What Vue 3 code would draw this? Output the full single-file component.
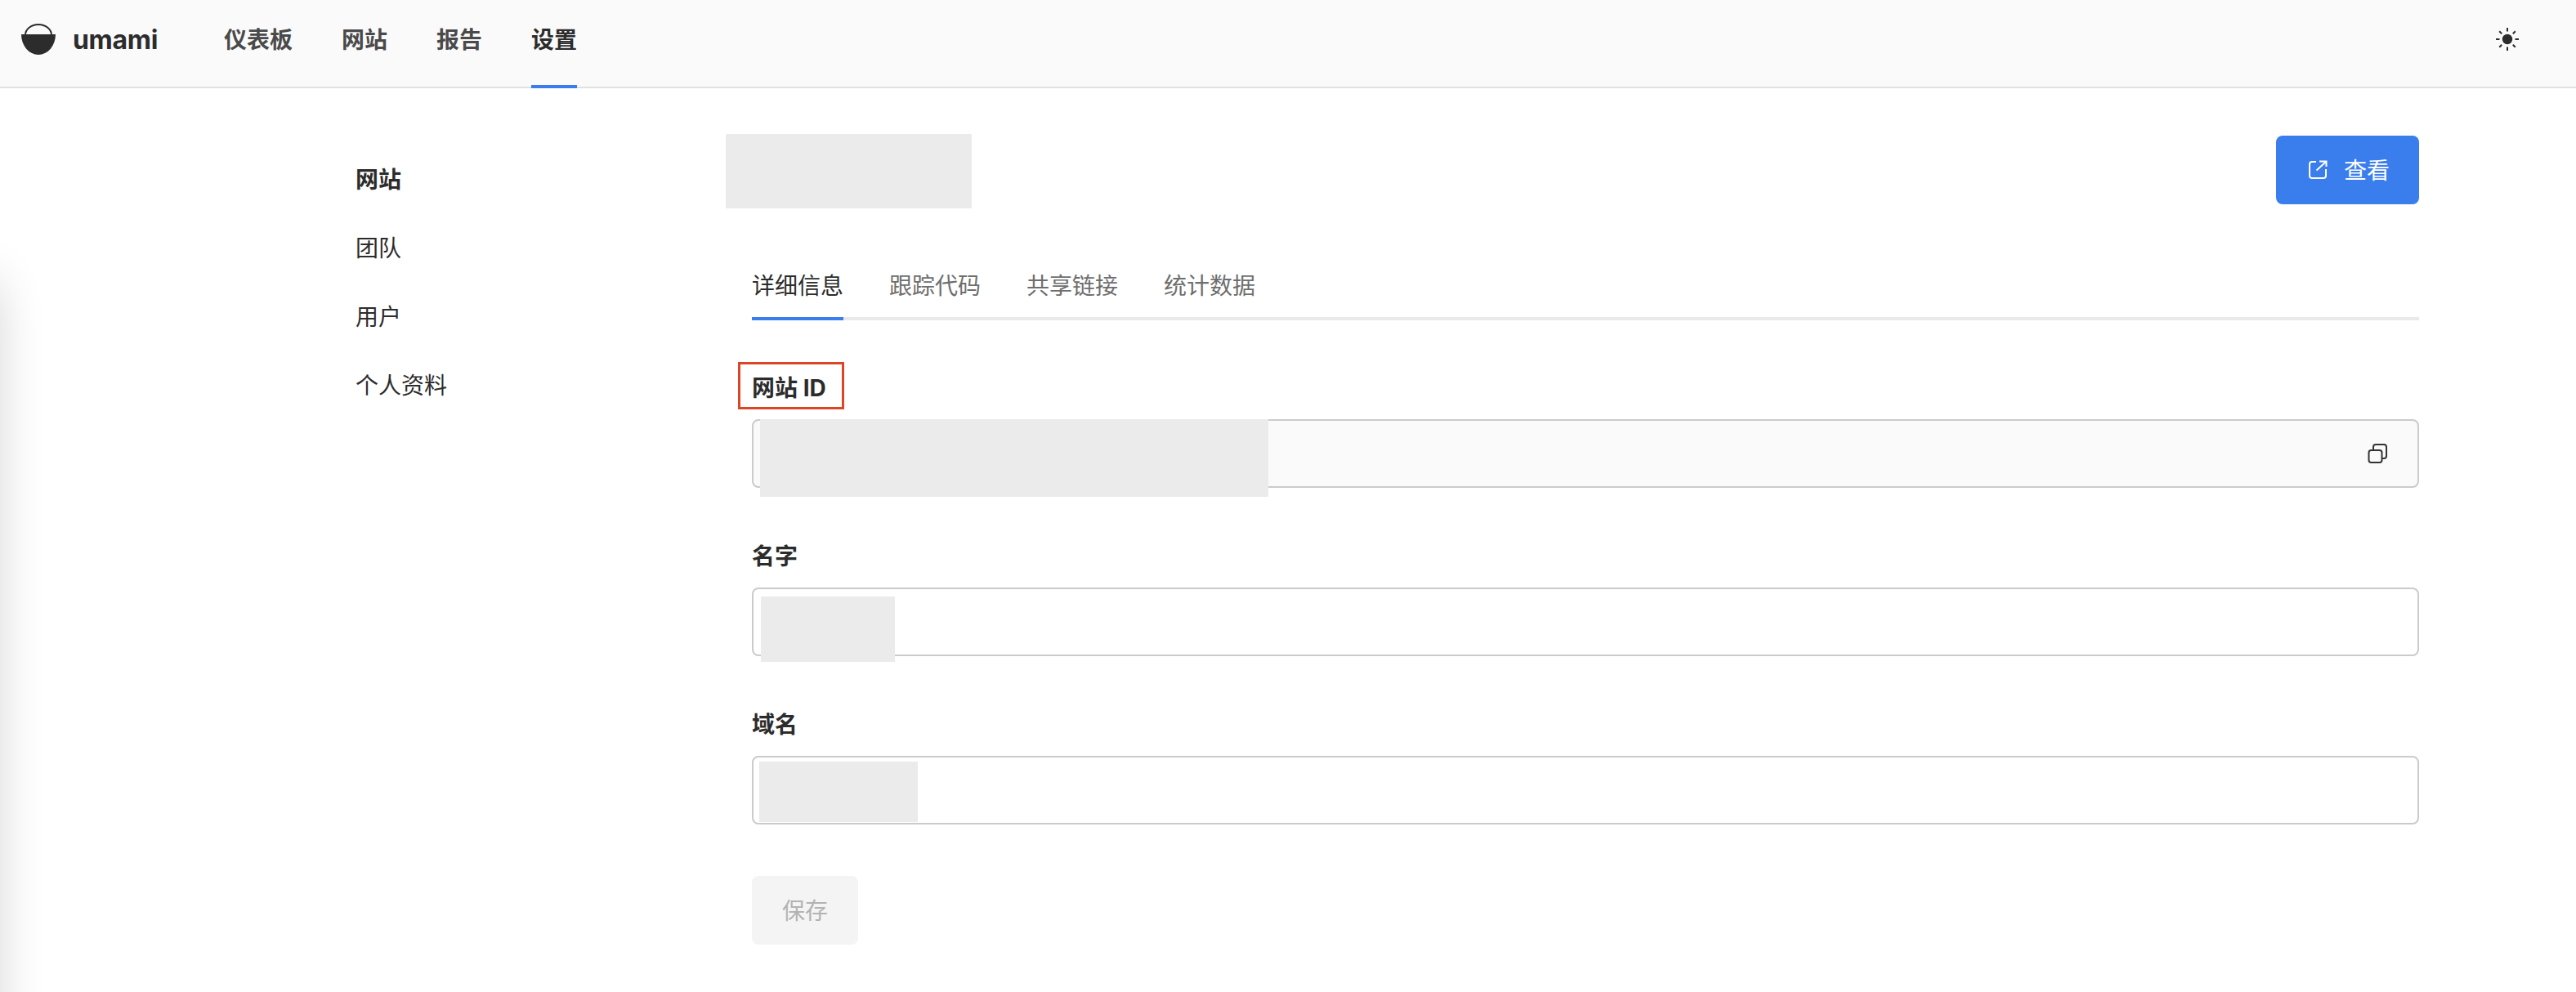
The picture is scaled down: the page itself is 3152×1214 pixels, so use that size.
<script setup>
const navItems = [
  { label: '仪表板' },
  { label: '网站' },
  { label: '报告' },
  { label: '设置', active: true },
]
const sideItems = [
  { label: '网站', active: true },
  { label: '团队' },
  { label: '用户' },
  { label: '个人资料' },
]
const tabs = [
  { label: '详细信息', active: true },
  { label: '跟踪代码' },
  { label: '共享链接' },
  { label: '统计数据' },
]
</script>

<template>
  <div class="app">
    <div class="edge-shadow"></div>
    <header class="topbar">
      <div class="brand">
        <svg class="logo" width="42" height="40" viewBox="0 0 42 40">
          <path d="M5 14a16 13 0 0 1 32 0" fill="none" stroke="#2c2c2c" stroke-width="2" />
          <path d="M0 13h42a21 25 0 0 1-42 0z" fill="#2c2c2c" />
        </svg>
        <span class="brand-name">umami</span>
      </div>
      <nav class="nav">
        <a v-for="item in navItems" :key="item.label" class="nav-item" :class="{ active: item.active }">{{ item.label }}</a>
      </nav>
      <svg class="sun" width="30" height="30" viewBox="0 0 30 30">
        <circle cx="15" cy="15" r="6.2" fill="#2c2c2c" />
        <g stroke="#2c2c2c" stroke-width="2" fill="none">
          <path d="M15 1v4.5M15 24.5V29M1 15h4.5M24.5 15H29M5.2 5.2l3 3M21.8 21.8l3 3M5.2 24.8l3-3M21.8 8.2l3-3" />
        </g>
      </svg>
    </header>

    <div class="body">
      <aside class="side">
        <a v-for="item in sideItems" :key="item.label" class="side-item" :class="{ active: item.active }">{{ item.label }}</a>
      </aside>

      <main class="main">
        <div class="title-row">
          <div class="title-mask"></div>
          <button class="view-btn" type="button">
            <svg width="24" height="24" viewBox="0 0 24 24" fill="none" stroke="#fff" stroke-width="2">
              <path d="M10 2H5a3 3 0 0 0-3 3v14a3 3 0 0 0 3 3h14a3 3 0 0 0 3-3v-8" />
              <path d="M10.5 12.5L22.5 1.5M14 1.5h8.5V8" />
            </svg>
            <span class="view-text">查看</span>
          </button>
        </div>

        <div class="panel">
          <div class="tabs">
            <a v-for="tab in tabs" :key="tab.label" class="tab" :class="{ active: tab.active }">{{ tab.label }}</a>
          </div>

          <form class="form" @submit.prevent>
            <div class="field">
              <label class="label marked">网站 ID</label>
              <div class="input readonly">
                <div class="mask mask-id"></div>
                <svg class="copy" width="24" height="24" viewBox="0 0 24 24" fill="none" stroke="#333" stroke-width="2">
                  <rect x="1.5" y="8" width="16" height="15" rx="3" />
                  <path d="M7 7V4a3 3 0 0 1 3-3h10a3 3 0 0 1 3 3v11a3 3 0 0 1-3 3h-2" />
                </svg>
              </div>
            </div>
            <div class="field">
              <label class="label">名字</label>
              <div class="input"><div class="mask mask-name"></div></div>
            </div>
            <div class="field">
              <label class="label">域名</label>
              <div class="input"><div class="mask mask-domain"></div></div>
            </div>
            <button class="save" type="button" disabled>保存</button>
          </form>
        </div>
      </main>
    </div>
  </div>
</template>

<style>
html, body { margin: 0; background: #fff; }
</style>

<style scoped>
.app {
  position: relative;
  height: 100vh;
  overflow: hidden;
  background: #fff;
  color: #2c2c2c;
  font-family: Inter, "Noto Sans CJK SC", sans-serif;
  font-size: 28px;
}
.edge-shadow {
  position: absolute;
  left: -60px;
  top: 340px;
  width: 55px;
  height: 1400px;
  border-radius: 30px;
  box-shadow: 0 0 60px rgba(0, 0, 0, 0.19);
}
.topbar {
  position: relative;
  display: flex;
  align-items: flex-start;
  height: 108px;
  padding: 0 69px 0 26px;
  box-sizing: border-box;
  background: #fafafa;
  box-shadow: inset 0 -2px 0 #e1e1e1;
}
.brand {
  display: flex;
  align-items: center;
  gap: 21px;
  width: 248px;
  height: 98px;
}
.logo { flex: none; }
.brand-name {
  font-size: 32px;
  font-weight: 700;
  line-height: 40px;
  letter-spacing: -0.3px;
}
.nav {
  display: flex;
  gap: 60px;
  flex: 1;
}
.nav-item {
  display: block;
  height: 108px;
  box-sizing: border-box;
  line-height: 98px;
  font-weight: 700;
  color: #4a4a4a;
  border-bottom: 4px solid transparent;
}
.nav-item.active {
  color: #2c2c2c;
  border-bottom-color: #3a7dec;
}
.sun { flex: none; margin-top: 33px; }
.body { display: flex; }
.side {
  display: flex;
  flex-direction: column;
  flex: none;
  width: 453px;
  padding: 70px 0 0 435px;
}
.side-item {
  display: block;
  line-height: 84px;
}
.side-item.active { font-weight: 700; }
.main {
  flex: none;
  width: 2072px;
  padding-top: 56px;
}
.title-row {
  display: flex;
  justify-content: space-between;
  align-items: flex-start;
}
.title-mask {
  width: 301px;
  height: 91px;
  background: #ebebeb;
}
.view-btn {
  display: flex;
  align-items: center;
  gap: 20px;
  width: 175px;
  height: 84px;
  margin-top: 2px;
  padding: 0 0 0 39px;
  box-sizing: border-box;
  border: 0;
  border-radius: 8px;
  background: #3a7dec;
  color: #fff;
  font: inherit;
}
.view-text { margin-top: -2px; }
.panel {
  margin: 75px 0 0 32px;
}
.tabs {
  display: flex;
  gap: 56px;
  border-bottom: 4px solid #e9e9e9;
}
.tab {
  display: block;
  margin-bottom: -4px;
  padding-bottom: 18px;
  line-height: 40px;
  color: #6e6e6e;
  border-bottom: 4px solid transparent;
}
.tab.active {
  color: #2c2c2c;
  border-bottom-color: #3a7dec;
}
.form {
  display: flex;
  flex-direction: column;
  gap: 64px;
  margin-top: 63px;
}
.field {
  display: flex;
  flex-direction: column;
  gap: 18px;
}
.label {
  position: relative;
  align-self: flex-start;
  line-height: 40px;
  font-weight: 700;
}
.label.marked::after {
  content: "";
  position: absolute;
  left: -17px;
  top: -12px;
  width: 130px;
  height: 58px;
  box-sizing: border-box;
  border: 3px solid #dc4626;
}
.input {
  position: relative;
  display: flex;
  align-items: center;
  justify-content: flex-end;
  height: 84px;
  box-sizing: border-box;
  padding-right: 37px;
  border: 2px solid #cbcbcb;
  border-radius: 8px;
  background: #fff;
}
.input.readonly { background: #fafafa; }
.mask {
  position: absolute;
  background: #ebebeb;
}
.mask-id { left: 8px; top: -2px; width: 622px; height: 95px; }
.mask-name { left: 9px; top: 9px; width: 164px; height: 80px; }
.mask-domain { left: 7px; top: 5px; width: 194px; height: 74px; }
.copy { position: relative; }
.save {
  width: 130px;
  height: 84px;
  margin-top: -1px;
  padding: 0 0 2px;
  border: 0;
  border-radius: 8px;
  background: #f4f4f4;
  color: #b3b3b3;
  font: inherit;
}
</style>
